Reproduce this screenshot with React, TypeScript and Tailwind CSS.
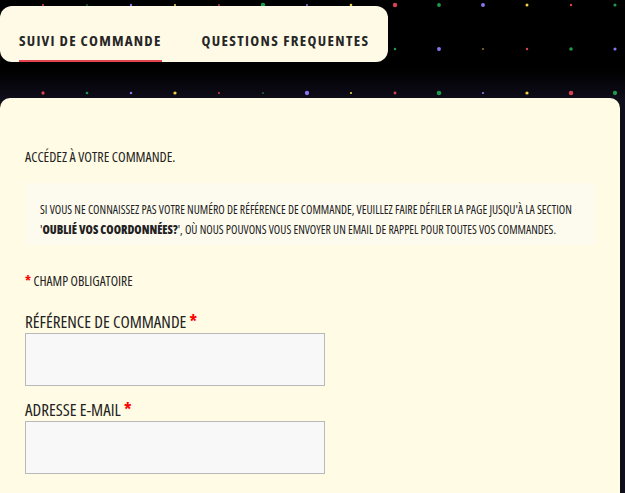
const palette = ["#f1d04b", "#d8434f", "#1f9a4b", "#8677ee"];

function Stars() {
  const dots: { x: number; y: number; r: number; c: string }[] = [];
  for (let row = 0; row < 12; row++) {
    for (let k = 0; k < 16; k++) {
      const seed = Math.sin(row * 12.9898 + k * 78.233) * 43758.5453;
      const rnd = seed - Math.floor(seed);
      dots.push({
        x: -1 + 44 * k,
        y: 5 + 44 * row,
        r: 0.8 + rnd * 1.5,
        c: palette[(k + (row % 2)) % 4],
      });
    }
  }
  return (
    <svg className="absolute inset-0 w-full h-full" aria-hidden>
      {dots.map((d, i) => (
        <circle key={i} cx={d.x} cy={d.y} r={d.r} fill={d.c} />
      ))}
    </svg>
  );
}

export default function App() {
  return (
    <div className="relative min-h-screen overflow-hidden bg-[linear-gradient(to_bottom,#000_70px,#0f0e1b_100px)] font-['Open_Sans',sans-serif] [font-stretch:75%] text-[#222]">
      <Stars />

      {/* Tabs */}
      <div className="relative pt-[6px]">
        <div className="flex h-[56px] w-[388px] gap-[40px] rounded-[12px] bg-[#fefae6] pl-[19px]">
          <div className="relative flex items-center pt-[12px] text-[15px] font-bold tracking-[1.2px] text-[#262626]">
            SUIVI DE COMMANDE
            <span className="absolute bottom-0 left-0 right-0 h-[2px] bg-[#e2434f]" />
          </div>
          <div className="flex items-center pt-[12px] text-[15px] font-bold tracking-[1.35px] text-[#262626]">
            QUESTIONS FREQUENTES
          </div>
        </div>
      </div>

      {/* Card */}
      <main className="relative mt-[36px] min-h-[400px] w-[620px] rounded-t-[10px] bg-[#fffbe4] px-[25px] pt-[49px]">
        <p className="text-[14px] leading-[20px] font-medium">ACCÉDEZ À VOTRE COMMANDE.</p>

        <div className="mt-[16px] bg-[#fdfaee] px-[15px] pt-[16px] pb-[6px] text-[11.8px] leading-[20px] whitespace-nowrap">
          SI VOUS NE CONNAISSEZ PAS VOTRE NUMÉRO DE RÉFÉRENCE DE COMMANDE, VEUILLEZ FAIRE DÉFILER LA PAGE JUSQU'À LA SECTION
          <br />
          '<b className="font-extrabold">OUBLIÉ VOS COORDONNÉES?</b>', OÙ NOUS POUVONS VOUS ENVOYER UN EMAIL DE RAPPEL POUR TOUTES VOS COMMANDES.
        </div>

        <p className="mt-[26px] text-[13.5px] leading-[20px] font-medium">
          <span className="font-bold text-[#f00]">*</span> CHAMP OBLIGATOIRE
        </p>

        <label className="mt-[20px] block text-[17px] leading-[22px] font-medium">
          RÉFÉRENCE DE COMMANDE <span className="font-bold text-[#f00]">*</span>
        </label>
        <input className="block h-[53px] w-[300px] border border-[#b9b9b9] bg-[#f8f8f8] outline-none" />

        <label className="mt-[13px] block text-[17px] leading-[22px] font-medium">
          ADRESSE E-MAIL <span className="font-bold text-[#f00]">*</span>
        </label>
        <input className="block h-[53px] w-[300px] border border-[#b9b9b9] bg-[#f8f8f8] outline-none" />
      </main>
    </div>
  );
}
